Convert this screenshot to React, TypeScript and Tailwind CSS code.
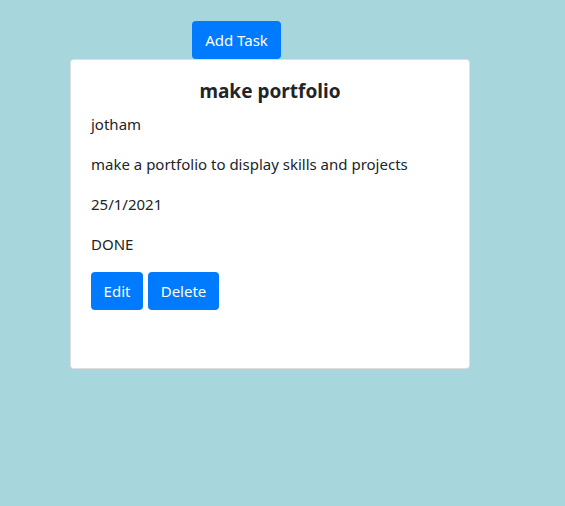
export default function App() {
  return (
    <div
      className="min-h-screen w-full bg-[#a7d7dc] pt-[21px] text-[#212529]"
      style={{ fontFamily: '"Noto Sans", "Open Sans", sans-serif' }}
    >
      <div className="ml-[70px] flex w-[400px] flex-col">
        {/* top action */}
        <button className="ml-[122px] h-[38px] w-[89px] self-start rounded-[4px] bg-[#007bff] text-[15px] leading-6 text-white">
          Add Task
        </button>

        {/* task card */}
        <div className="h-[310px] rounded-[4px] border border-[rgba(0,0,0,0.125)] bg-white px-5 pt-[19px] pb-5">
          <h5 className="mb-[9px] text-center text-[19px] font-bold leading-6">make portfolio</h5>
          <p className="mb-4 text-[15px] leading-6">jotham</p>
          <p className="mb-4 text-[15px] leading-6">make a portfolio to display skills and projects</p>
          <p className="mb-4 text-[15px] leading-6">25/1/2021</p>
          <p className="mb-4 text-[15px] leading-6">DONE</p>
          <div className="flex gap-[5px]">
            <button className="h-[38px] w-[52px] rounded-[4px] bg-[#007bff] text-[15px] text-white">Edit</button>
            <button className="h-[38px] w-[71px] rounded-[4px] bg-[#007bff] text-[15px] text-white">Delete</button>
          </div>
        </div>
      </div>
    </div>
  );
}
